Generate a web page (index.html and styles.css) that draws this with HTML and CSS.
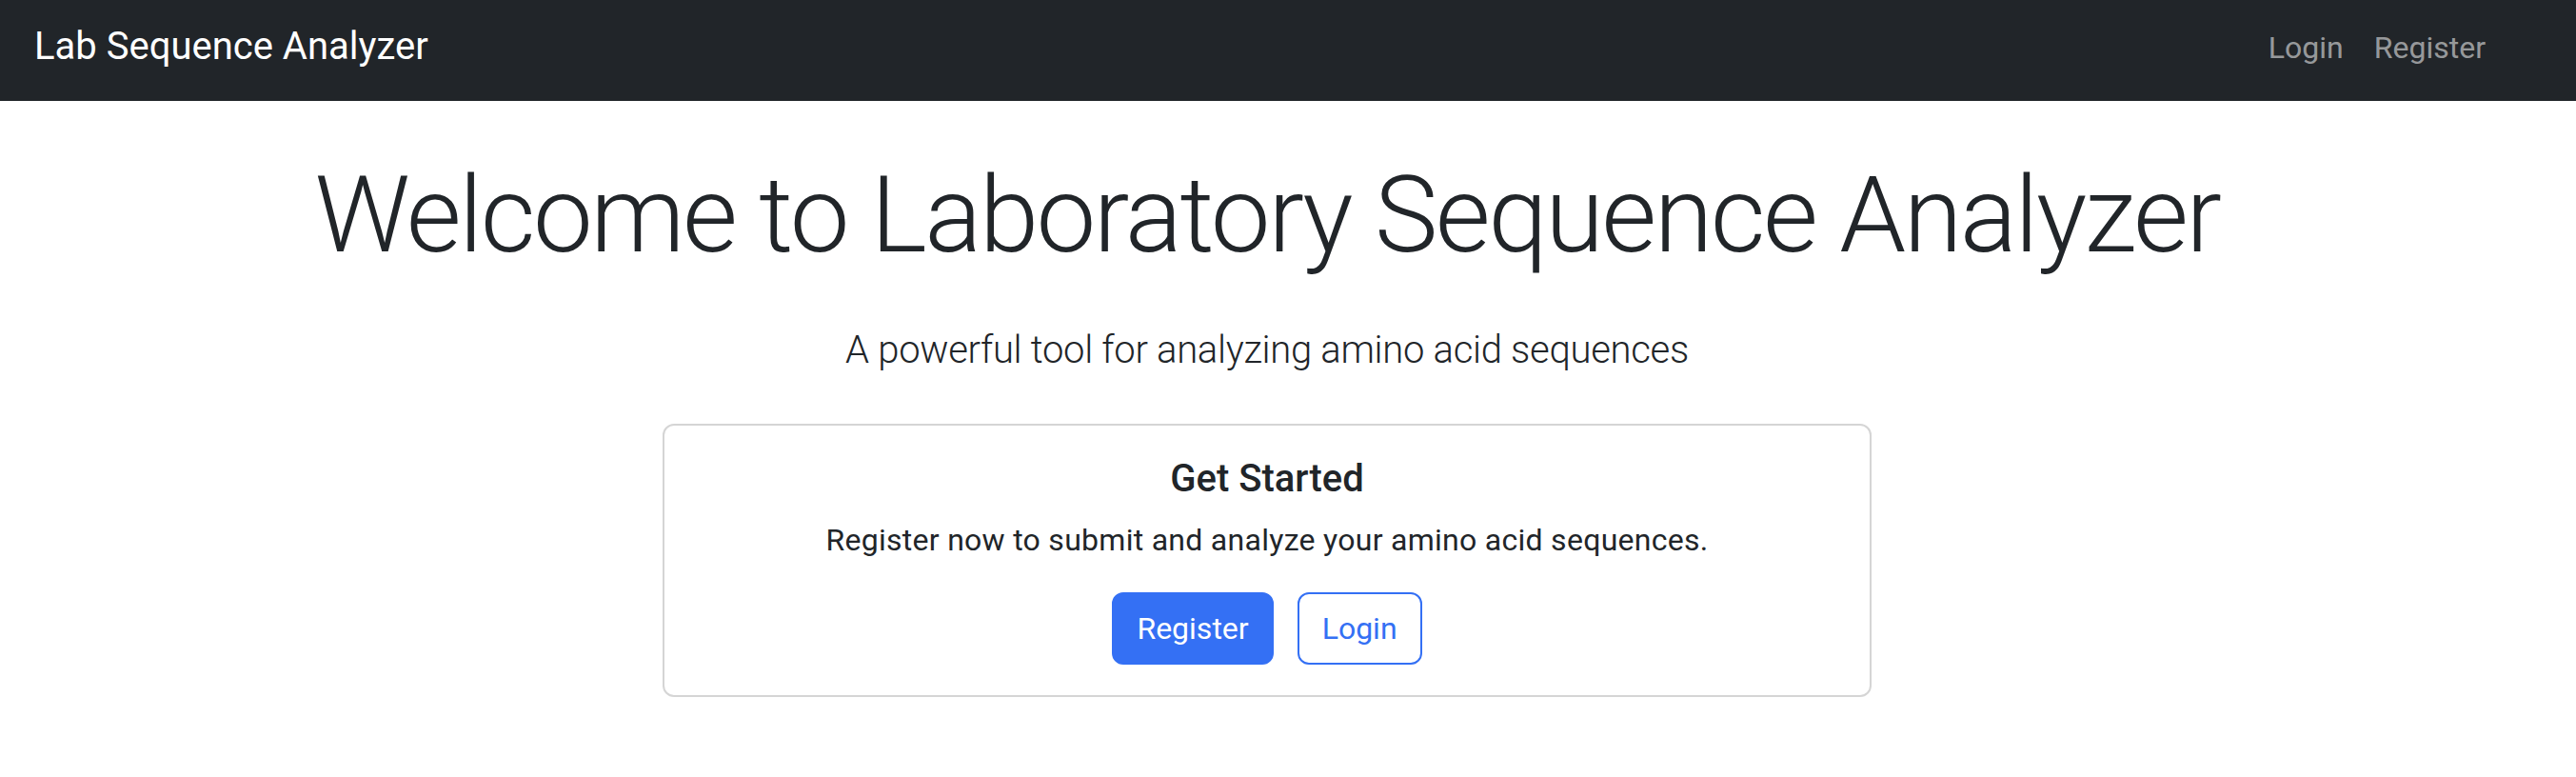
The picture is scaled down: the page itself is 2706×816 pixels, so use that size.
FILE: index.html
```html
<!DOCTYPE html>
<html lang="en">
<head>
<meta charset="utf-8">
<title>Lab Sequence Analyzer</title>
<link rel="stylesheet" href="styles.css">
</head>
<body>
<nav class="navbar">
  <a class="brand" href="#">Lab Sequence Analyzer</a>
  <div class="nav-links">
    <a class="nav-link" href="#">Login</a>
    <a class="nav-link" href="#">Register</a>
  </div>
</nav>
<main class="main">
  <h1 class="display">Welcome to Laboratory Sequence Analyzer</h1>
  <p class="lead">A powerful tool for analyzing amino acid sequences</p>
  <div class="card">
    <h5 class="card-title">Get Started</h5>
    <p class="card-text">Register now to submit and analyze your amino acid sequences.</p>
    <div class="actions">
      <a class="btn btn-primary" href="#">Register</a>
      <a class="btn btn-outline" href="#">Login</a>
    </div>
  </div>
</main>
</body>
</html>
```
FILE: styles.css
```css
* { box-sizing: border-box; }
html, body { margin: 0; padding: 0; }
body {
  font-family: Roboto, "Noto Sans", sans-serif;
  color: #212529;
  background: #fff;
  width: 2706px;
  height: 816px;
  overflow: hidden;
}
a { text-decoration: none; }
.navbar {
  height: 106px;
  background: #212529;
  display: flex;
  align-items: flex-start;
  justify-content: space-between;
  padding: 0 79px 0 36px;
}
.brand {
  margin-top: 19px;
  color: #fff;
  font-size: 40px;
  line-height: 60px;
}
.nav-links { display: flex; margin-top: 26px; }
.nav-link {
  color: rgba(255,255,255,0.55);
  font-size: 32px;
  line-height: 48px;
  padding: 0 16px;
}
.main {
  display: flex;
  flex-direction: column;
  align-items: center;
  padding: 53px 44px 0 0;
}
.display {
  margin: 0 0 45px;
  font-size: 112px;
  font-weight: 300;
  line-height: 1.2;
  letter-spacing: -2.5px;
}
.lead {
  margin: 0 0 47px;
  font-size: 40px;
  font-weight: 300;
  line-height: 1.5;
  letter-spacing: -0.3px;
}
.card {
  width: 1270px;
  border: 2px solid #d5d5d5;
  border-radius: 12px;
  padding: 32px;
  text-align: center;
}
.card-title {
  margin: 0 0 16px;
  font-size: 40px;
  font-weight: 500;
  line-height: 1.2;
}
.card-text {
  margin: 0 0 31px;
  font-size: 32px;
  line-height: 1.5;
  letter-spacing: 0.28px;
}
.actions {
  display: flex;
  justify-content: center;
  gap: 25px;
}
.btn {
  display: inline-block;
  font-size: 32px;
  line-height: 48px;
  padding: 12px 24px;
  border: 2px solid #3470f4;
  border-radius: 12px;
}
.btn-primary { background: #3470f4; color: #fff; }
.btn-outline { background: #fff; color: #3470f4; }
```
